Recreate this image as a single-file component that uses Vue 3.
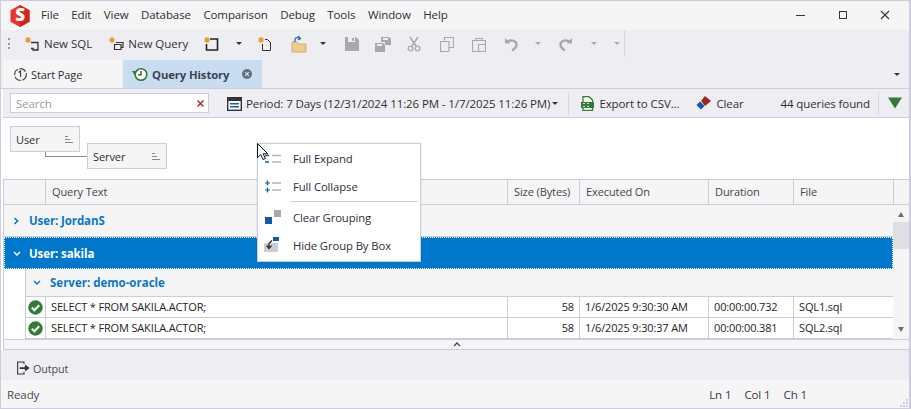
<script setup>
const menus = ['File', 'Edit', 'View', 'Database', 'Comparison', 'Debug', 'Tools', 'Window', 'Help'];

const rows = [
  { id: 1, size: 58, executed: '1/6/2025 9:30:30 AM', duration: '00:00:00.732', file: 'SQL1.sql' },
  { id: 2, size: 58, executed: '1/6/2025 9:30:37 AM', duration: '00:00:00.381', file: 'SQL2.sql' }
];
</script>

<template>
  <div class="window">
    <!-- menu -->
    <div class="menubar">
      <svg class="logo" width="22" height="24" viewBox="0 0 22 24">
        <path d="M11 1 20.500 6.200V17.800L11 23 1.500 17.800V6.200Z" fill="#ea3329" />
        <path d="M11 1 20.500 6.200V17.800L11 23Z" fill="#d4261f" />
        <text x="11" y="17" text-anchor="middle" class="logo-s">S</text>
      </svg>
      <span v-for="m in menus" :key="m" class="menu-item">{{ m }}</span>
      <div class="win-btns">
        <svg width="10" height="10" viewBox="0 0 10 10"><path d="M0 5.500H9" stroke="#333" fill="none" /></svg>
        <svg width="10" height="10" viewBox="0 0 10 10"><rect x="1.500" y="1.500" width="7" height="7" stroke="#333" fill="none" /></svg>
        <svg width="10" height="10" viewBox="0 0 10 10"><path d="M1 1 9 9M9 1 1 9" stroke="#333" stroke-width="1.100" fill="none" /></svg>
      </div>
    </div>

    <!-- main toolbar -->
    <div class="toolbar">
      <span class="grip"></span>
      <button class="tool first">
        <svg width="18" height="16" viewBox="0 0 18 16"><path d="M4 1V7M1 4H7M2 2 6 6M6 2 2 6" stroke="#e39a2d" stroke-width="1.200" /><path d="M7 6.500H14V14H9V12.500H7" fill="none" stroke="#333" stroke-width="1.300" /></svg>
        New SQL
      </button>
      <button class="tool second">
        <svg width="18" height="16" viewBox="0 0 18 16"><path d="M4 1V7M1 4H7M2 2 6 6M6 2 2 6" stroke="#e39a2d" stroke-width="1.200" /><path d="M8 6.500H15V11.500H13M6.500 8.500H13V13.500H6.500Z" fill="none" stroke="#333" stroke-width="1.200" /></svg>
        New Query
      </button>
      <svg class="ico i-new" width="18" height="16" viewBox="0 0 18 16"><path d="M4 1V7M1 4H7M2 2 6 6M6 2 2 6" stroke="#e39a2d" stroke-width="1.200" /><path d="M7 3H14.500V14H3.500V8" fill="none" stroke="#222" stroke-width="1.600" /></svg>
      <span class="caret c1"></span>
      <svg class="ico i-file" width="18" height="16" viewBox="0 0 18 16"><path d="M4 1V7M1 4H7M2 2 6 6M6 2 2 6" stroke="#e39a2d" stroke-width="1.200" /><path d="M8 3.500H10.500L13.500 6.500V14.500H5.500V8" fill="none" stroke="#333" /></svg>
      <svg class="ico i-open" width="16" height="18" viewBox="0 0 16 18"><path d="M1 7H6L8 9H15V17H1Z" fill="#eccb8b" stroke="#cfae6c" /><path d="M4 7V4.500C4 2.500 7 2 9 3.500M7 1 9.500 3.500 7 5" fill="none" stroke="#1c6fb8" stroke-width="1.300" /></svg>
      <span class="caret c2"></span>
      <svg class="ico i-save" width="14" height="14" viewBox="0 0 14 14"><path d="M0 0H11L14 3V14H0Z" fill="#a9a9ab" /><path d="M3 0H10V5H3Z" fill="#eeeef2" /><path d="M7 1H9V4H7Z" fill="#a9a9ab" /></svg>
      <svg class="ico i-saveall" width="16" height="15" viewBox="0 0 16 15"><path d="M6 0H14L16 2V8H10V5H6Z" fill="#a9a9ab" /><path d="M0 6H8L10 8V15H0Z" fill="#a9a9ab" /><path d="M8 1H13V3H8ZM2 7H7V9H2Z" fill="#eeeef2" /></svg>
      <svg class="ico i-cut" width="14" height="16" viewBox="0 0 14 16"><path d="M3 1 9 10M11 1 5 10" stroke="#a9a9ab" stroke-width="1.500" fill="none" /><circle cx="3.500" cy="12.500" r="2.300" fill="none" stroke="#a9a9ab" stroke-width="1.300" /><circle cx="10.500" cy="12.500" r="2.300" fill="none" stroke="#a9a9ab" stroke-width="1.300" /></svg>
      <svg class="ico i-copy" width="14" height="15" viewBox="0 0 14 15"><path d="M4.500 3.500V.5H13.500V10.500H9.500M.5 4.500H9V14.500H.5Z" fill="none" stroke="#a9a9ab" stroke-width="1.200" /></svg>
      <svg class="ico i-paste" width="14" height="15" viewBox="0 0 14 15"><path d="M.5 3.500H13.500V14.500H.5ZM4 3.500V1.500H10V3.500M6.500 7.500H13.500V14.500H6.500Z" fill="none" stroke="#a9a9ab" stroke-width="1.200" /></svg>
      <svg class="ico i-undo" width="14" height="15" viewBox="0 0 14 15"><path d="M1 1V6.500H6.500Z" fill="#a9a9ab" /><path d="M3 5C6 2.500 12.500 3 12.500 7.500 12.500 10.500 10.500 12 8 13.500" fill="none" stroke="#a9a9ab" stroke-width="2.400" /></svg>
      <span class="caret muted c3"></span>
      <svg class="ico i-redo" width="14" height="15" viewBox="0 0 14 15"><path d="M13 1V6.500H7.500Z" fill="#a9a9ab" /><path d="M11 5C8 2.500 1.500 3 1.500 7.500 1.500 10.500 3.500 12 6 13.500" fill="none" stroke="#a9a9ab" stroke-width="2.400" /></svg>
      <span class="caret muted c4"></span>
      <span class="caret muted c5"></span>
      <span class="tool-sep"></span>
    </div>

    <!-- tabs -->
    <div class="tabs">
      <div class="tab">
        <svg width="15" height="15" viewBox="0 0 15 15"><circle cx="7.500" cy="7.500" r="5.800" fill="none" stroke="#555" stroke-width="1.300" stroke-dasharray="7 1.500" /><path d="M5.500 5.500 7.500 4V10" fill="none" stroke="#444" stroke-width="1.200" /></svg>
        Start Page
      </div>
      <div class="tab active">
        <svg width="16" height="16" viewBox="0 0 16 16"><circle cx="9" cy="8.500" r="5.800" fill="#fff" stroke="#2f7d32" stroke-width="1.600" /><path d="M0 5H5L2.500 9Z" fill="#2f7d32" /><path d="M9 5V8.800H6" fill="none" stroke="#333" stroke-width="1.200" /></svg>
        <span class="tab-title">Query History</span>
        <svg class="tab-close" width="10" height="10" viewBox="0 0 10 10"><circle cx="5" cy="5" r="5" fill="#66717f" /><path d="M3.200 3.200 6.800 6.800M6.800 3.200 3.200 6.800" stroke="#dde3ea" stroke-width="1.200" /></svg>
      </div>
      <span class="caret tabs-caret"></span>
    </div>

    <div class="content">
      <!-- history filter bar -->
      <div class="filterbar">
        <div class="search">
          <span class="search-hint">Search</span>
          <svg width="7" height="7" viewBox="0 0 7 7"><path d="M.5 .5 6.500 6.500M6.500 .5 .5 6.500" stroke="#a5342c" stroke-width="1.500" /></svg>
        </div>
        <div class="period">
          <svg width="15" height="15" viewBox="0 0 15 15"><rect x=".7" y="1.700" width="13.600" height="12.600" fill="#fff" stroke="#333" stroke-width="1.400" /><path d="M1 2H14V5H1Z" fill="#333" /><path d="M3 7H12V8.500H3ZM3 10H12V11.500H3Z" fill="#1c5c9e" /></svg>
          <span>Period: 7 Days (12/31/2024 11:26 PM - 1/7/2025 11:26 PM)</span>
          <span class="caret small"></span>
        </div>
        <span class="bar-sep"></span>
        <div class="export">
          <svg width="13" height="15" viewBox="0 0 13 15"><path d="M2 .7H8L11.500 4V14.300H2Z" fill="#fff" stroke="#2f7d32" stroke-width="1.300" /><rect x="0" y="6" width="13" height="6" fill="#2f7d32" /><path d="M2 7.500H4M2 10.500H4M6 7.500H8M6 10.500H8" stroke="#cfe6cf" /></svg>
          <span>Export to CSV...</span>
        </div>
        <div class="clear">
          <svg width="15" height="14" viewBox="0 0 15 14"><path d="M9 0 15 5 9 10 5 5Z" fill="#a3271b" /><path d="M4 5.500 8.500 10 5 13.500 .5 9Z" fill="#0d5aa7" /></svg>
          <span>Clear</span>
        </div>
        <span class="found">44 queries found</span>
        <span class="bar-sep end"></span>
        <svg class="funnel" width="14" height="12" viewBox="0 0 14 12"><path d="M0 .5H14L7 11.500Z" fill="#2f7d32" /></svg>
      </div>

      <!-- group by box -->
      <div class="group-box">
        <div class="group-chip user">
          <span>User</span>
          <svg class="sort" width="8" height="7" viewBox="0 0 8 7"><path d="M0 .5H3M0 3.500H5M0 6.500H8" stroke="#888" /></svg>
        </div>
        <div class="group-chip server">
          <span>Server</span>
          <svg class="sort" width="8" height="7" viewBox="0 0 8 7"><path d="M0 .5H3M0 3.500H5M0 6.500H8" stroke="#888" /></svg>
        </div>
      </div>

      <!-- grid -->
      <div class="grid-head">
        <div class="cell"></div>
        <div class="cell">Query Text</div>
        <div class="cell">Size (Bytes)</div>
        <div class="cell">Executed On</div>
        <div class="cell">Duration</div>
        <div class="cell">File</div>
        <div class="cell"></div>
      </div>

      <div class="grid-body">
        <div class="grid-rows">
          <div class="group-row">
            <svg width="7" height="8" viewBox="0 0 7 8"><path d="M1.500 1 4.500 4 1.500 7" fill="none" stroke="#0a76c9" stroke-width="1.600" /></svg>
            <span>User: JordanS</span>
          </div>
          <div class="group-row selected">
            <svg width="8" height="7" viewBox="0 0 8 7"><path d="M1 2 4 5 7 2" fill="none" stroke="#fff" stroke-width="1.400" /></svg>
            <span>User: sakila</span>
          </div>
          <div class="server-wrap">
            <div class="indent"></div>
            <div class="server-list">
              <div class="server-row">
                <svg width="8" height="7" viewBox="0 0 8 7"><path d="M1 2 4 5 7 2" fill="none" stroke="#0a76c9" stroke-width="1.400" /></svg>
                <span>Server: demo-oracle</span>
              </div>
              <div v-for="r in rows" :key="r.id" class="data-row">
                <div class="dcell status">
                  <svg width="15" height="15" viewBox="0 0 15 15"><circle cx="7.500" cy="7.500" r="7.200" fill="#2e7d32" /><path d="M3.800 7.800 6.400 10.300 11.200 5.200" fill="none" stroke="#fff" stroke-width="2" /></svg>
                </div>
                <div class="dcell">SELECT * FROM SAKILA.ACTOR;</div>
                <div class="dcell num">{{ r.size }}</div>
                <div class="dcell">{{ r.executed }}</div>
                <div class="dcell">{{ r.duration }}</div>
                <div class="dcell">{{ r.file }}</div>
              </div>
            </div>
          </div>
        </div>
        <div class="scrollbar">
          <span class="arrow up"></span>
          <span class="thumb"></span>
          <span class="arrow down"></span>
        </div>
      </div>

      <div class="splitter">
        <svg width="8" height="5" viewBox="0 0 8 5"><path d="M1 4 4 1 7 4" fill="none" stroke="#444" stroke-width="1.300" /></svg>
      </div>
    </div>

    <!-- output dock -->
    <div class="output">
      <svg width="14" height="14" viewBox="0 0 16 15"><path d="M8 3V.7H.7V14.300H8V12" fill="none" stroke="#333" stroke-width="1.200" /><path d="M3 6.500H9V3.500L14.500 7.500 9 11.500V8.500H3Z" fill="#333" /></svg>
      <span>Output</span>
    </div>

    <!-- status -->
    <div class="statusbar">
      <span>Ready</span>
      <div class="status-right">
        <span>Ln 1</span>
        <span>Col 1</span>
        <span>Ch 1</span>
      </div>
      <svg class="resize" width="8" height="8" viewBox="0 0 8 8"><path d="M6 0H8V2H6ZM3 3H5V5H3ZM6 3H8V5H6ZM0 6H2V8H0ZM3 6H5V8H3ZM6 6H8V8H6Z" fill="#d2d2da" /></svg>
    </div>

    <!-- context menu -->
    <div class="ctx">
      <div class="ctx-item">
        <svg width="18" height="14" viewBox="0 0 18 14"><path d="M1 4.500H5M1 11H5" stroke="#0d5aa7" stroke-width="1.300" /><path d="M8 4.500H17M8 11H17" stroke="#b5b5b8" stroke-width="1.300" /></svg>
        <span>Full Expand</span>
      </div>
      <div class="ctx-item">
        <svg width="18" height="14" viewBox="0 0 18 14"><path d="M1 4H6M3.500 1.500V6.500M1 11H6M3.500 8.500V13.500" stroke="#0d5aa7" stroke-width="1.200" /><path d="M8 4H17M8 11H17" stroke="#b5b5b8" stroke-width="1.300" /></svg>
        <span>Full Collapse</span>
      </div>
      <div class="ctx-sep"></div>
      <div class="ctx-item">
        <svg width="18" height="16" viewBox="0 0 18 16"><rect x="1" y="8" width="7" height="7" fill="#0d5aa7" /><rect x="10" y="1" width="7" height="7" fill="#a9a9ab" /></svg>
        <span>Clear Grouping</span>
      </div>
      <div class="ctx-item">
        <svg width="18" height="16" viewBox="0 0 18 16"><rect x="0" y="6" width="14" height="9" fill="#cfcfd1" /><rect x="9" y="0" width="6" height="4" fill="#0d5aa7" /><path d="M8 3.500 5 6.500V11M2.500 8.500 5 11.500 7.500 8.500" fill="none" stroke="#333" stroke-width="1.400" /></svg>
        <span>Hide Group By Box</span>
      </div>
    </div>

    <!-- mouse pointer -->
    <svg class="pointer" width="13" height="18" viewBox="0 0 13 18"><path d="M.5 .5V14.500L3.800 11.500 6 16.500 8.300 15.500 6.200 10.800H10.800Z" fill="#fff" fill-opacity=".75" stroke="#111" stroke-width="1" /></svg>
  </div>
</template>

<style scoped>
.window {
  position: relative;
  width: 911px;
  height: 409px;
  box-sizing: border-box;
  border: 1px solid #ccccdc;
  border-right-width: 2px;
  display: flex;
  flex-direction: column;
  overflow: hidden;
  font-family: "Open Sans", "Noto Sans", sans-serif;
  font-size: 11px;
  letter-spacing: -0.1px;
  color: #2e2e38;
  background: #eeeef2;
}
svg { flex: none; display: block; }

.menubar { height: 29px; flex: none; background: #f5f5f5; display: flex; align-items: center; padding: 0 0 2px 8px; box-sizing: border-box; }
.logo { margin-right: 10px; margin-top: 2px; }
.logo-s { font-family: "Open Sans", sans-serif; font-size: 17px; font-weight: 800; fill: #fff; }
.menu-item { margin-right: 12.500px; font-size: 11.500px; }
.win-btns { margin-left: auto; display: flex; gap: 32px; padding-right: 19px; }

.toolbar { height: 30px; display: flex; align-items: center; flex: none; padding-bottom: 3px; box-sizing: border-box; }
.grip { width: 2px; height: 11px; margin-left: 7px; border-left: 2px dotted #999; }
button.tool { border: none; background: none; font: inherit; font-size: 11.500px; color: inherit; padding: 0; display: flex; align-items: center; gap: 2px; }
.tool.first { margin-left: 12px; }
.tool.second { margin-left: 16px; }
.ico { margin-top: 1px; }
.i-new { margin-left: 15px; }
.caret { width: 0; height: 0; border-left: 3.500px solid transparent; border-right: 3.500px solid transparent; border-top: 3.500px solid #333; display: inline-block; flex: none; }
.caret.muted { border-top-color: #a9a9ab; }
.caret.small { margin-left: -2px; }
.c1 { margin: 0 15px 0 15px; }
.c2 { margin: 0 19px 0 13px; }
.i-file { margin-right: 16px; }
.i-save { margin-right: 16px; }
.i-saveall { margin-right: 16px; }
.i-cut { margin-right: 19px; }
.i-copy { margin-right: 18px; }
.i-paste { margin-right: 18px; }
.c3 { margin: 0 18px 0 17px; }
.c4 { margin: 0 17px 0 18px; }
.c5 { margin-right: 4px; }
.tool-sep { width: 1px; height: 27px; background: #d8d8e0; }

.tabs { height: 28px; flex: none; display: flex; align-items: stretch; padding-left: 2px; gap: 1px; }
.tab { width: 119px; box-sizing: border-box; background: #f5f5f5; display: flex; align-items: center; gap: 3px; padding-left: 10px; font-size: 11px; }
.tab.active { width: 139px; background: #c8dcf2; padding-left: 9px; gap: 4px; }
.tab-title { font-weight: 700; color: #3c4354; font-size: 11.300px; }
.tab-close { margin-left: 9px; }
.tabs-caret { margin: 13px 9px 0 auto; }

.content { flex: none; background: #fff; border-top: 1px solid #ccccdc; padding-left: 2px; }

.filterbar { height: 28px; background: #eeeef2; display: flex; align-items: center; border-bottom: 1px solid #ccccdc; padding-left: 7px; box-sizing: content-box; font-size: 11.500px; }
.search { width: 199px; height: 20px; box-sizing: border-box; background: #fff; border: 1px solid #ccccdc; display: flex; align-items: center; justify-content: space-between; padding: 0 4px 0 5px; }
.search-hint { color: #9a9a9f; }
.period { display: flex; align-items: center; gap: 4px; margin-left: 18px; }
.bar-sep { width: 1px; height: 23px; background: #d8d8e0; margin-left: 10px; }
.export { display: flex; align-items: center; gap: 5px; margin-left: 12px; }
.clear { display: flex; align-items: center; gap: 5px; margin-left: 17px; }
.found { margin-left: auto; }
.bar-sep.end { margin-left: 8px; }
.funnel { margin: 0 7px 0 9px; }

.group-box { height: 62px; background: #fff; display: flex; align-items: flex-start; box-sizing: border-box; padding: 8px 0 0 7px; border-bottom: 1px solid #ccccdc; }
.group-chip { height: 26px; box-sizing: border-box; background: #f5f5f5; border: 1px solid #ccccdc; display: flex; align-items: center; justify-content: space-between; padding: 0 6px 0 5px; position: relative; }
.group-chip.user { width: 70px; }
.group-chip.server { width: 80px; margin: 17px 0 0 7px; }
.group-chip.user::after { content: ""; position: absolute; left: 34px; top: 25px; width: 41px; height: 4px; border-left: 1px solid #888; border-bottom: 1px solid #888; }

.grid-head,
.data-row { display: grid; }
.grid-head { grid-template-columns: 42px 462px 72px 129px 85px 100px 1fr; height: 25px; background: #f5f5f5; border-bottom: 1px solid #ccccdc; border-left: 1px solid #ccccdc; box-sizing: border-box; }
.cell { border-right: 1px solid #ccccdc; display: flex; align-items: center; padding: 0 0 2px 6px; color: #45454f; font-size: 11px; white-space: nowrap; }
.cell:last-child { border-right: none; }

.grid-body { height: 134px; display: flex; overflow: hidden; border-bottom: 1px solid #ccccdc; border-left: 1px solid #ccccdc; box-sizing: content-box; background: #f5f5f5; }
.grid-rows { width: 889px; flex: none; }
.group-row { height: 32px; box-sizing: border-box; display: flex; align-items: center; gap: 9px; padding-left: 9px; font-weight: 700; color: #0a76c9; background: #f5f5f5; border-bottom: 1px solid #ccccdc; font-size: 11.500px; }
.group-row.selected { background: #0078cc; color: #fff; outline: 1px dotted #fff; outline-offset: -1px; border-bottom: none; height: 32px; gap: 8px; }
.server-wrap { display: flex; }
.indent { width: 22px; box-sizing: border-box; background: #fff; border-right: 1px solid #ccccdc; flex: none; }
.server-list { flex: 1; min-width: 0; }
.server-row { height: 28px; box-sizing: border-box; display: flex; align-items: center; gap: 9px; padding-left: 7px; font-weight: 700; font-size: 11.500px; letter-spacing: 0; color: #0a76c9; background: #f5f5f5; border-bottom: 1px solid #ccccdc; }
.data-row { grid-template-columns: 20px 462px 72px 129px 85px 99px; height: 21px; background: #fff; border-bottom: 1px solid #ccccdc; box-sizing: border-box; }
.dcell { border-right: 1px solid #ccccdc; display: flex; align-items: center; padding: 0 0 1px 5px; font-size: 11px; color: #1e1e1e; letter-spacing: -0.15px; white-space: nowrap; }
.dcell:last-child { border-right: none; }
.dcell.num { justify-content: flex-end; padding: 0 5px 1px 0; }
.dcell.status { padding: 0 0 0 2px; }
.scrollbar { flex: 1; display: flex; flex-direction: column; align-items: center; position: relative; }
.arrow { width: 0; height: 0; border-left: 3.500px solid transparent; border-right: 3.500px solid transparent; }
.arrow.up { border-bottom: 5px solid #6e6e72; margin-top: 7px; }
.arrow.down { border-top: 5px solid #6e6e72; margin-top: auto; margin-bottom: 7px; }
.thumb { width: 100%; height: 27px; background: #dedee3; margin-top: 5px; }

.splitter { height: 10px; box-sizing: border-box; background: #f5f5f5; display: flex; align-items: center; justify-content: center; border-bottom: 1px solid #ccccdc; border-left: 1px solid #ccccdc; }

.output { height: 30px; flex: none; display: flex; align-items: center; gap: 2px; padding: 6px 0 0 16px; font-size: 10.800px; box-sizing: border-box; color: #4a4a55; }
.statusbar { flex: 1; background: #f5f5f5; display: flex; align-items: center; padding-left: 6px; font-size: 11.500px; position: relative; color: #4a4a55; }
.status-right { margin-left: auto; margin-right: 102px; display: flex; gap: 13px; color: #3c3350; }
.resize { position: absolute; right: 1px; bottom: 1px; }

.ctx { position: absolute; left: 256px; top: 142px; width: 164px; height: 119px; box-sizing: border-box; background: #fff; border: 1px solid #ccccdc; box-shadow: 0 0 2px rgba(0,0,0,.12); font-size: 11.300px; }
.ctx-item { height: 28px; display: flex; align-items: center; gap: 11px; padding-left: 6px; }
.ctx-sep { height: 1px; margin: 1px 2px 1px 32px; background: #d0d0d8; }

.pointer { position: absolute; left: 256px; top: 142px; }
</style>

<style>
html, body { margin: 0; background: #fff; }
</style>
